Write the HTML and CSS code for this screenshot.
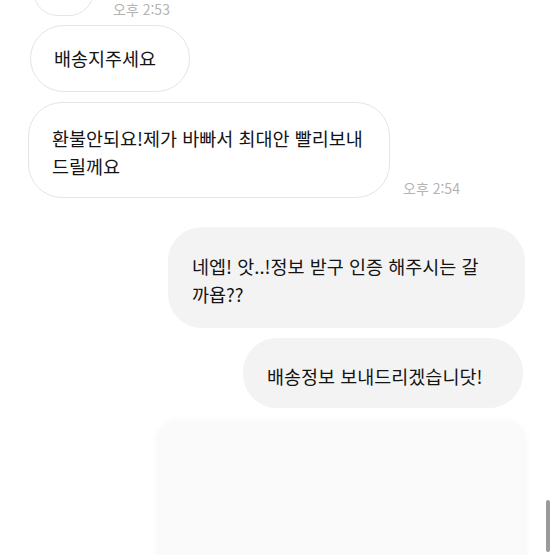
FILE: index.html
```html
<!DOCTYPE html>
<html lang="ko">
<head>
    <meta charset="UTF-8">
    <meta name="viewport" content="width=device-width, initial-scale=1.0">
    <title>채팅</title>
    <link rel="stylesheet" href="styles.css">
</head>
<body>

    <div class="chat">
        <div class="row row-top">
            <div class="bubble bubble-in bubble-cut"></div>
            <span class="time">오후 2:53</span>
        </div>

        <div class="row row-2">
            <div class="bubble bubble-in">배송지주세요</div>
        </div>

        <div class="row row-3">
            <div class="bubble bubble-in">환불안되요!제가 바빠서 최대안 빨리보내<br>드릴께요</div>
            <span class="time">오후 2:54</span>
        </div>

        <div class="row row-out row-4">
            <div class="bubble bubble-out">네엡! 앗..!정보 받구 인증 해주시는 갈<br>까욥??</div>
        </div>

        <div class="row row-out row-5">
            <div class="bubble bubble-out">배송정보 보내드리겠습니닷!</div>
        </div>

        <div class="row row-out row-6">
            <div class="blank-card"></div>
        </div>
    </div>

    <div class="scrollbar"></div>

</body>
</html>
```

FILE: styles.css
```css
body {
    margin: 0;
    padding: 0;
    background: #ffffff;
    font-family: "Noto Sans CJK KR", "Noto Sans", sans-serif;
    color: #141414;
    overflow: hidden;
    height: 555px;
}

.chat {
    display: flex;
    flex-direction: column;
}

.row {
    display: flex;
    align-items: flex-end;
}

.row-out {
    justify-content: flex-end;
    padding-right: 30px;
}

.bubble {
    font-size: 18.5px;
    line-height: 28px;
    border-radius: 34px;
    box-sizing: border-box;
    white-space: nowrap;
}

.bubble-in {
    background: #ffffff;
    border: 1px solid #e4e4e4;
}

.bubble-out {
    background: #f3f3f3;
}

.time {
    font-size: 14px;
    color: #b4b4b4;
    line-height: 14px;
}

/* first message, cut off at the top */
.row-top {
    margin-top: -34px;
    padding-left: 33px;
}

.bubble-cut {
    width: 61px;
    height: 50px;
}

.row-top .time {
    margin-left: 19px;
    margin-bottom: 0;
}

.row-2 {
    margin-top: 9px;
    padding-left: 30px;
}

.row-2 .bubble {
    width: 160px;
    height: 67px;
    padding: 18px 0 0 23px;
}

.row-3 {
    margin-top: 10px;
    padding-left: 28px;
}

.row-3 .bubble {
    width: 362px;
    height: 96px;
    padding: 21px 0 0 23px;
}

.row-3 .time {
    margin-left: 13px;
    margin-bottom: 3px;
}

.row-4 {
    margin-top: 29px;
}

.row-4 .bubble {
    width: 357px;
    height: 101px;
    padding: 25px 0 0 24px;
}

.row-5 {
    margin-top: 10px;
    padding-right: 32px;
}

.row-5 .bubble {
    width: 280px;
    height: 70px;
    padding: 24px 0 0 24px;
}

.row-6 {
    margin-top: 12px;
    padding-right: 28px;
}

.blank-card {
    width: 371px;
    height: 180px;
    background: #fafafa;
    border-radius: 22px;
    box-shadow: 0 0 6px 2px #fcfcfc;
}

.scrollbar {
    position: absolute;
    top: 500px;
    left: 546px;
    width: 4px;
    height: 52px;
    border-radius: 2px;
    background: #9a9a9a;
}
```
